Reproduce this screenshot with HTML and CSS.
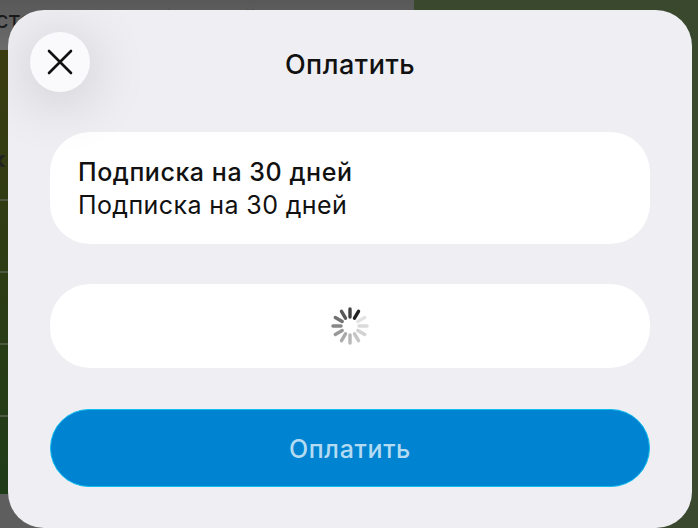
FILE: index.html
```html
<!DOCTYPE html>
<html lang="ru">

<head>
    <meta charset="UTF-8">
    <title>Оплатить</title>
    <link rel="stylesheet" href="styles.css">
</head>

<body>
    <div class="backdrop">
        <div class="topbar">
            <div class="topbar-left">стоимость выбранной</div>
            <div class="topbar-map"></div>
        </div>
        <div class="rows">
            <div class="row"><span class="row-arrow">‹</span></div>
            <div class="row"></div>
            <div class="row"></div>
            <div class="row"></div>
            <div class="row row-last"></div>
        </div>
        <div class="bottombar"></div>
    </div>

    <div class="sheet">
        <div class="sheet-head">
            <button class="close-btn">
                <svg width="26" height="26" viewBox="0 0 26 26">
                    <path d="M2 2 L24 24 M24 2 L2 24" stroke="#111" stroke-width="2.6" stroke-linecap="round" fill="none" />
                </svg>
            </button>
            <div class="sheet-title">Оплатить</div>
        </div>

        <div class="card card-info">
            <div class="card-title">Подписка на 30 дней</div>
            <div class="card-text">Подписка на 30 дней</div>
        </div>

        <div class="card card-loading">
            <svg width="40" height="40" viewBox="-20 -20 40 40">
                <g stroke="#222" stroke-width="3.4" stroke-linecap="round">
                    <line y1="-9" y2="-17" opacity="0.85" />
                    <line y1="-9" y2="-17" opacity="1" transform="rotate(30)" />
                    <line y1="-9" y2="-17" opacity="0.12" transform="rotate(60)" />
                    <line y1="-9" y2="-17" opacity="0.16" transform="rotate(90)" />
                    <line y1="-9" y2="-17" opacity="0.2" transform="rotate(120)" />
                    <line y1="-9" y2="-17" opacity="0.26" transform="rotate(150)" />
                    <line y1="-9" y2="-17" opacity="0.32" transform="rotate(180)" />
                    <line y1="-9" y2="-17" opacity="0.38" transform="rotate(210)" />
                    <line y1="-9" y2="-17" opacity="0.46" transform="rotate(240)" />
                    <line y1="-9" y2="-17" opacity="0.54" transform="rotate(270)" />
                    <line y1="-9" y2="-17" opacity="0.64" transform="rotate(300)" />
                    <line y1="-9" y2="-17" opacity="0.75" transform="rotate(330)" />
                </g>
            </svg>
        </div>

        <button class="pay-btn">Оплатить</button>
    </div>
</body>

</html>
```

FILE: styles.css
```css
html,
body {
    height: 100%;
}

body {
    font-family: 'Inter', 'Noto Sans', sans-serif;
    margin: 0;
    overflow: hidden;
    background-color: #3a482e;
}

/* page behind the sheet */
.backdrop {
    display: flex;
    flex-direction: column;
    height: 528px;
}

.topbar {
    display: flex;
    height: 50px;
}

.topbar-left {
    box-sizing: border-box;
    width: 414px;
    padding-top: 5px;
    background: linear-gradient(#585858, #6c6c6c);
    color: #1a1a1a;
    font-size: 24px;
    white-space: nowrap;
    overflow: hidden;
    text-indent: -5px;
}

.topbar-map {
    flex: 1;
    background-color: #3a482e;
}

.rows {
    width: 414px;
    height: 444px;
    background: linear-gradient(#3a3c10, #1f3c18);
}

.row {
    box-sizing: border-box;
    height: 72px;
    border-bottom: 2px solid #4d5840;
    color: #222;
    font-size: 26px;
}

.row:first-child {
    height: 151px;
}

.row-last {
    border-bottom: 0;
}

.row-arrow {
    display: block;
    margin-left: -5px;
    padding-top: 94px;
    font-weight: 700;
}

.bottombar {
    width: 414px;
    height: 34px;
    background-color: #5e5e5e;
}

/* payment sheet */
.sheet {
    position: absolute;
    left: 8px;
    top: 10px;
    width: 684px;
    height: 518px;
    box-sizing: border-box;
    padding: 22px 42px 0;
    background-color: #eeeef3;
    border-radius: 36px;
    overflow: hidden;
}

.sheet-head {
    display: flex;
    align-items: center;
    justify-content: center;
    position: relative;
    height: 60px;
    margin-bottom: 40px;
}

.close-btn {
    position: absolute;
    left: -20px;
    top: 0;
    display: flex;
    align-items: center;
    justify-content: center;
    width: 60px;
    height: 60px;
    padding: 0;
    border: none;
    border-radius: 50%;
    background-color: #fafafc;
    box-shadow: 0 8px 60px rgba(0, 0, 0, 0.19);
}

.sheet-title {
    margin-top: 4px;
    font-size: 27px;
    font-weight: 500;
    letter-spacing: 0.5px;
    color: #111;
}

.card {
    background-color: #fff;
    border-radius: 40px;
}

.card-info {
    box-sizing: border-box;
    height: 112px;
    padding: 24px 28px;
    margin-bottom: 40px;
    font-size: 25px;
    line-height: 33px;
    letter-spacing: 0.4px;
    color: #111;
}

.card-title {
    font-weight: 500;
    letter-spacing: 0.55px;
}

.card-loading {
    display: flex;
    align-items: center;
    justify-content: center;
    height: 84px;
    margin-bottom: 41px;
}

.pay-btn {
    display: block;
    width: 100%;
    height: 78px;
    padding-top: 3px;
    border: 1px solid #12bdee;
    border-radius: 39px;
    background-color: #0084d1;
    color: #b5dbf2;
    font-family: inherit;
    font-size: 25px;
    font-weight: 500;
    letter-spacing: 0.65px;
}
```
